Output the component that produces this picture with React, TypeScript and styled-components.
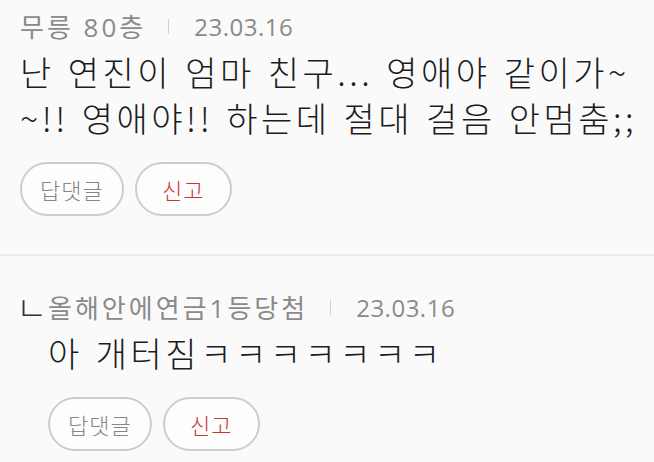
import styled, { createGlobalStyle } from "styled-components";

const GlobalStyle = createGlobalStyle`
  html, body {
    margin: 0;
    padding: 0;
    background-color: #fafafa;
  }
  body {
    font-family: "Open Sans", "Noto Sans CJK KR", sans-serif;
    color: #222;
  }
`;

const List = styled.ul`
  list-style: none;
  margin: 0;
  padding: 0;
  width: 654px;
`;

interface IItemProps {
  isReply?: boolean;
}

const Item = styled.li<IItemProps>`
  display: flex;
  padding: ${(props) => (props.isReply ? "36px 0 7px 16px" : "11px 0 38px 20px")};
  border-bottom: ${(props) => (props.isReply ? "none" : "2px solid #ebebeb")};
`;

const ReplyMark = styled.span`
  width: 32px;
  flex-shrink: 0;
  font-family: "Noto Sans CJK KR", sans-serif;
  font-weight: 300;
  font-size: 34px;
  line-height: 30px;
  color: #333;
`;

const Content = styled.div`
  flex: 1;
  min-width: 0;
`;

const Meta = styled.div`
  display: flex;
  align-items: center;
  height: 30px;
  font-size: 24px;
  color: #8a8a8a;
`;

const Author = styled.span`
  font-size: 26px;
  letter-spacing: 3px;
`;

const Date = styled.span`
  letter-spacing: 0.5px;
`;

const Divider = styled.span`
  width: 1px;
  height: 15px;
  margin: 0 25px 0 22px;
  background-color: #d0d0d0;
`;

const Text = styled.p`
  margin: 8px 0 0;
  padding-right: 6px;
  font-family: "Noto Sans CJK KR", sans-serif;
  font-weight: 300;
  font-size: 34px;
  line-height: 46px;
  letter-spacing: 3.5px;
  word-spacing: 2px;
  color: #1c1c1c;
  word-break: break-all;
`;

const Actions = styled.div`
  display: flex;
  gap: 11px;
  margin-top: 21px;
`;

interface IBtnProps {
  danger?: boolean;
}

const Btn = styled.button<IBtnProps>`
  box-sizing: border-box;
  height: 54px;
  min-width: 97px;
  padding: 0 18px;
  border: 2px solid #cdcdcd;
  border-radius: 27px;
  background-color: #fdfdfd;
  font-family: "Noto Sans CJK KR", sans-serif;
  font-weight: 300;
  font-size: 22px;
  letter-spacing: 1px;
  color: ${(props) => (props.danger ? "#c8372d" : "#858585")};
  cursor: pointer;
`;

interface IComment {
  id: number;
  author: string;
  date: string;
  text: string;
  isReply?: boolean;
}

const comments: IComment[] = [
  {
    id: 1,
    author: "무릉 80층",
    date: "23.03.16",
    text: "난 연진이 엄마 친구... 영애야 같이가~~!! 영애야!! 하는데 절대 걸음 안멈춤;;",
  },
  {
    id: 2,
    author: "올해안에연금1등당첨",
    date: "23.03.16",
    text: "아 개터짐ㅋㅋㅋㅋㅋㅋㅋ",
    isReply: true,
  },
];

function App() {
  return (
    <>
      <GlobalStyle />
      <List>
        {comments.map((c) => (
          <Item key={c.id} isReply={c.isReply}>
            {c.isReply && <ReplyMark>ㄴ</ReplyMark>}
            <Content>
              <Meta>
                <Author>{c.author}</Author>
                <Divider />
                <Date>{c.date}</Date>
              </Meta>
              <Text>{c.text}</Text>
              <Actions>
                <Btn type="button">답댓글</Btn>
                <Btn type="button" danger>
                  신고
                </Btn>
              </Actions>
            </Content>
          </Item>
        ))}
      </List>
    </>
  );
}

export default App;
